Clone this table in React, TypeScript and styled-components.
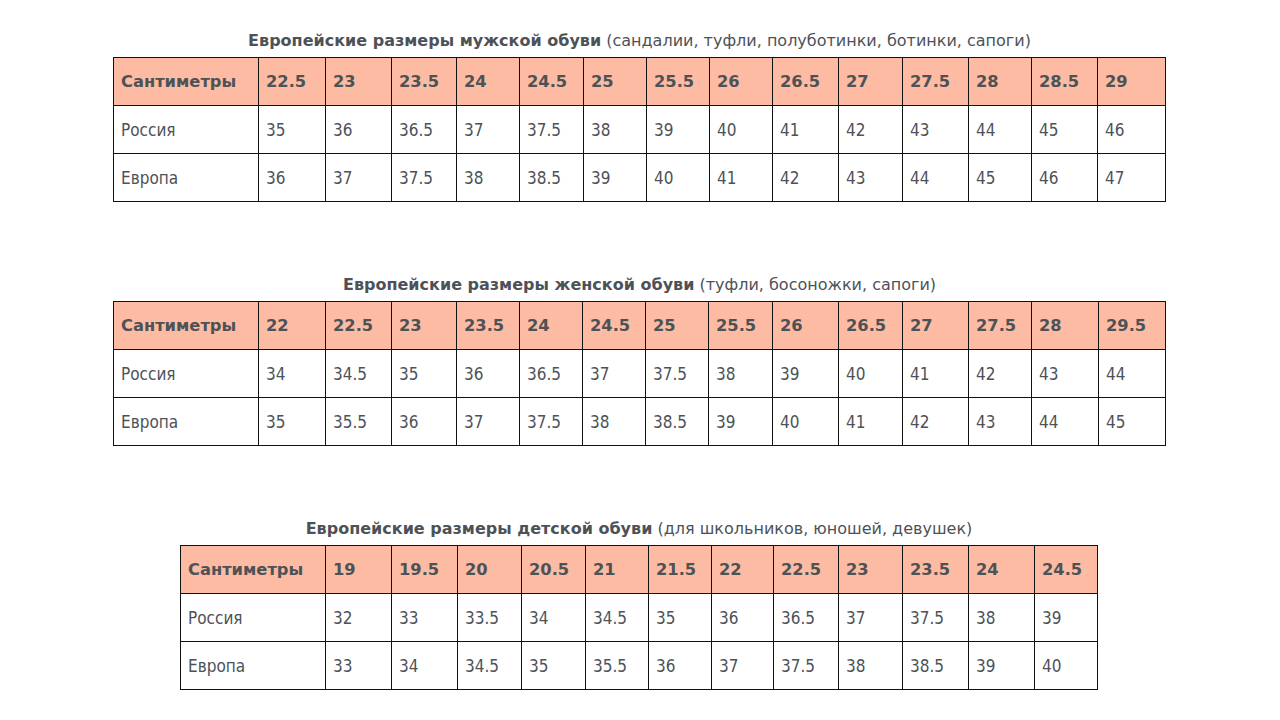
import styled, { createGlobalStyle } from "styled-components";

const GlobalStyle = createGlobalStyle`
  html, body {
    margin: 0;
    padding: 0;
    background: #ffffff;
  }
  body {
    font-family: "DejaVu Sans Condensed", "DejaVu Sans", Tahoma, sans-serif;
    color: #4d5257;
  }
`;

interface SizeTable {
  title: string;
  note: string;
  columns: number[];
  cm: string[];
  russia: string[];
  europe: string[];
  nudge?: boolean;
}

const tables: SizeTable[] = [
  {
    title: "Европейские размеры мужской обуви",
    note: "(сандалии, туфли, полуботинки, ботинки, сапоги)",
    columns: [145, 67, 66, 65, 63, 64, 63, 63, 63, 66, 64, 66, 63, 66, 68],
    cm: ["22.5", "23", "23.5", "24", "24.5", "25", "25.5", "26", "26.5", "27", "27.5", "28", "28.5", "29"],
    russia: ["35", "36", "36.5", "37", "37.5", "38", "39", "40", "41", "42", "43", "44", "45", "46"],
    europe: ["36", "37", "37.5", "38", "38.5", "39", "40", "41", "42", "43", "44", "45", "46", "47"],
  },
  {
    title: "Европейские размеры женской обуви",
    note: "(туфли, босоножки, сапоги)",
    columns: [145, 67, 66, 65, 63, 63, 63, 63, 64, 66, 64, 66, 63, 67, 67],
    cm: ["22", "22.5", "23", "23.5", "24", "24.5", "25", "25.5", "26", "26.5", "27", "27.5", "28", "29.5"],
    russia: ["34", "34.5", "35", "36", "36.5", "37", "37.5", "38", "39", "40", "41", "42", "43", "44"],
    europe: ["35", "35.5", "36", "37", "37.5", "38", "38.5", "39", "40", "41", "42", "43", "44", "45"],
  },
  {
    title: "Европейские размеры детской обуви",
    note: "(для школьников, юношей, девушек)",
    columns: [145, 66, 66, 64, 64, 63, 63, 62, 65, 64, 66, 66, 63],
    cm: ["19", "19.5", "20", "20.5", "21", "21.5", "22", "22.5", "23", "23.5", "24", "24.5"],
    russia: ["32", "33", "33.5", "34", "34.5", "35", "36", "36.5", "37", "37.5", "38", "39"],
    europe: ["33", "34", "34.5", "35", "35.5", "36", "37", "37.5", "38", "38.5", "39", "40"],
    nudge: true,
  },
];

const Page = styled.div`
  width: 1279px;
  padding-top: 31px;
  display: flex;
  flex-direction: column;
  align-items: center;
  gap: 73px;
`;

const Section = styled.section<{ $nudge?: boolean }>`
  display: flex;
  flex-direction: column;
  align-items: center;
  gap: 6px;
  margin-right: ${({ $nudge }) => ($nudge ? "1px" : "0")};
`;

const Title = styled.h2`
  margin: 0;
  height: 20px;
  line-height: 20px;
  font-family: "DejaVu Sans", Tahoma, sans-serif;
  font-size: 16px;
  font-weight: normal;
  color: #4d5257;
  white-space: nowrap;

  b {
    font-weight: bold;
  }
`;

const Grid = styled.div<{ $cols: string }>`
  display: grid;
  grid-template-columns: ${({ $cols }) => $cols};
  border-right: 1px solid #111;
  border-bottom: 1px solid #111;
`;

const Cell = styled.div<{ $head?: boolean }>`
  box-sizing: border-box;
  height: 48px;
  padding-left: 7px;
  display: flex;
  align-items: center;
  border-left: 1px solid #111;
  border-top: 1px solid #111;
  background: ${({ $head }) => ($head ? "#fcbba2" : "#ffffff")};
  font-family: ${({ $head }) =>
    $head ? `"DejaVu Sans", Tahoma, sans-serif` : `"DejaVu Sans Condensed", "DejaVu Sans", Tahoma, sans-serif`};
  font-size: ${({ $head }) => ($head ? "16.3px" : "17px")};
  font-weight: ${({ $head }) => ($head ? "bold" : "normal")};
  color: #4d5257;
  white-space: nowrap;
`;

export default function App() {
  return (
    <>
      <GlobalStyle />
      <Page>
        {tables.map((t) => (
          <Section key={t.title} $nudge={t.nudge}>
            <Title>
              <b>{t.title}</b> {t.note}
            </Title>
            <Grid $cols={t.columns.map((w) => `${w}px`).join(" ")}>
              <Cell $head>Сантиметры</Cell>
              {t.cm.map((v, i) => (
                <Cell $head key={`c${i}`}>
                  {v}
                </Cell>
              ))}
              <Cell>Россия</Cell>
              {t.russia.map((v, i) => (
                <Cell key={`r${i}`}>{v}</Cell>
              ))}
              <Cell>Европа</Cell>
              {t.europe.map((v, i) => (
                <Cell key={`e${i}`}>{v}</Cell>
              ))}
            </Grid>
          </Section>
        ))}
      </Page>
    </>
  );
}
